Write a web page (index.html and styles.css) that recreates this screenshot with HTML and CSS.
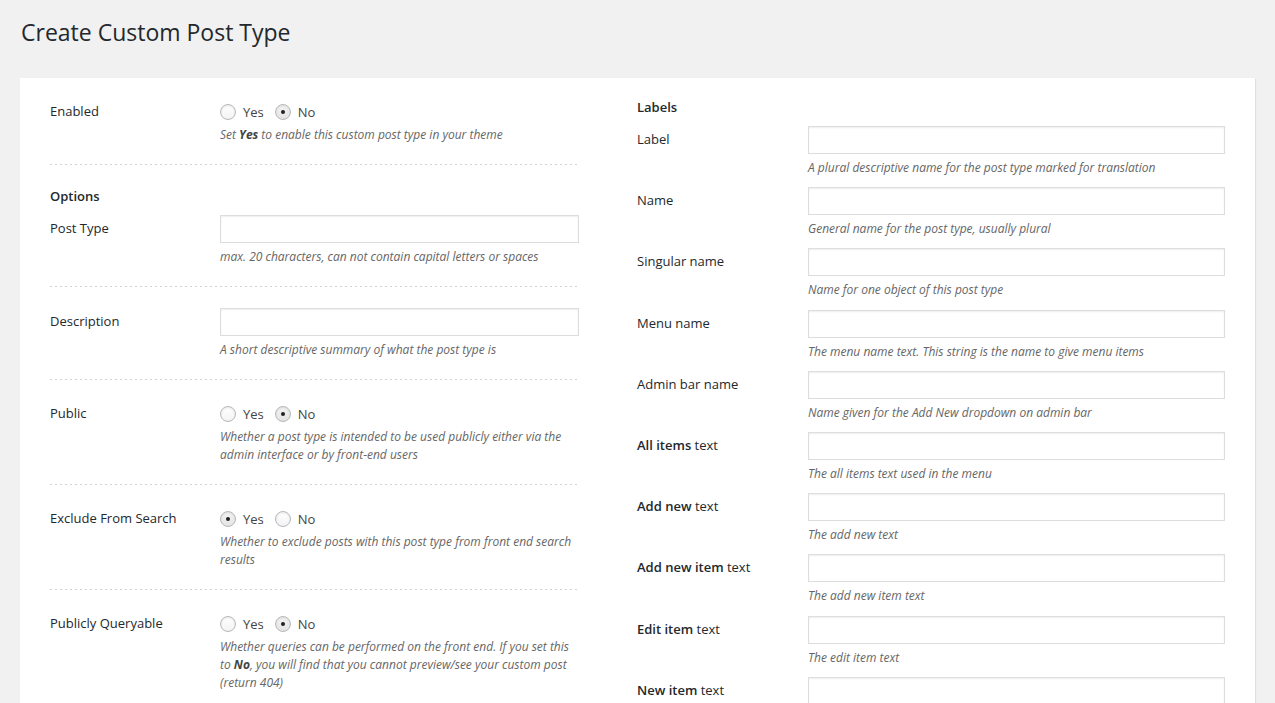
FILE: index.html
```html
<!DOCTYPE html>
<html lang="en">
<head>
<meta charset="utf-8">
<title>Create Custom Post Type</title>
<link rel="stylesheet" href="styles.css">
</head>
<body>
<div class="wrap">
  <h1 class="page-title">Create Custom Post Type</h1>
  <div class="panel">
    <div class="col col-left">
      <div class="section first">
        <div class="row">
          <div class="lbl lbl-radio">Enabled</div>
          <div class="field">
            <div class="radios">
              <span class="radio"></span><span class="rtext">Yes</span>
              <span class="radio checked"></span><span class="rtext">No</span>
            </div>
            <p class="desc">Set <b>Yes</b> to enable this custom post type in your theme</p>
          </div>
        </div>
      </div>
      <div class="section">
        <div class="heading">Options</div>
        <div class="row">
          <div class="lbl">Post Type</div>
          <div class="field">
            <input class="text" type="text">
            <p class="desc">max. 20 characters, can not contain capital letters or spaces</p>
          </div>
        </div>
      </div>
      <div class="section">
        <div class="row">
          <div class="lbl">Description</div>
          <div class="field">
            <input class="text" type="text">
            <p class="desc">A short descriptive summary of what the post type is</p>
          </div>
        </div>
      </div>
      <div class="section radio-sec">
        <div class="row">
          <div class="lbl lbl-radio">Public</div>
          <div class="field">
            <div class="radios">
              <span class="radio"></span><span class="rtext">Yes</span>
              <span class="radio checked"></span><span class="rtext">No</span>
            </div>
            <p class="desc">Whether a post type is intended to be used publicly either via the admin interface or by front-end users</p>
          </div>
        </div>
      </div>
      <div class="section radio-sec">
        <div class="row">
          <div class="lbl lbl-radio">Exclude From Search</div>
          <div class="field">
            <div class="radios">
              <span class="radio checked"></span><span class="rtext">Yes</span>
              <span class="radio"></span><span class="rtext">No</span>
            </div>
            <p class="desc">Whether to exclude posts with this post type from front end search results</p>
          </div>
        </div>
      </div>
      <div class="section radio-sec last">
        <div class="row">
          <div class="lbl lbl-radio">Publicly Queryable</div>
          <div class="field">
            <div class="radios">
              <span class="radio"></span><span class="rtext">Yes</span>
              <span class="radio checked"></span><span class="rtext">No</span>
            </div>
            <p class="desc">Whether queries can be performed on the front end. If you set this to <b>No</b>, you will find that you cannot preview/see your custom post (return 404)</p>
          </div>
        </div>
      </div>
    </div>

    <div class="col col-right">
      <div class="heading">Labels</div>
      <div class="rows">
        <div class="row">
          <div class="lbl">Label</div>
          <div class="field"><input class="text" type="text"><p class="desc">A plural descriptive name for the post type marked for translation</p></div>
        </div>
        <div class="row">
          <div class="lbl">Name</div>
          <div class="field"><input class="text" type="text"><p class="desc">General name for the post type, usually plural</p></div>
        </div>
        <div class="row">
          <div class="lbl">Singular name</div>
          <div class="field"><input class="text" type="text"><p class="desc">Name for one object of this post type</p></div>
        </div>
        <div class="row">
          <div class="lbl">Menu name</div>
          <div class="field"><input class="text" type="text"><p class="desc">The menu name text. This string is the name to give menu items</p></div>
        </div>
        <div class="row">
          <div class="lbl">Admin bar name</div>
          <div class="field"><input class="text" type="text"><p class="desc">Name given for the Add New dropdown on admin bar</p></div>
        </div>
        <div class="row">
          <div class="lbl"><b>All items</b> text</div>
          <div class="field"><input class="text" type="text"><p class="desc">The all items text used in the menu</p></div>
        </div>
        <div class="row">
          <div class="lbl"><b>Add new</b> text</div>
          <div class="field"><input class="text" type="text"><p class="desc">The add new text</p></div>
        </div>
        <div class="row">
          <div class="lbl"><b>Add new item</b> text</div>
          <div class="field"><input class="text" type="text"><p class="desc">The add new item text</p></div>
        </div>
        <div class="row">
          <div class="lbl"><b>Edit item</b> text</div>
          <div class="field"><input class="text" type="text"><p class="desc">The edit item text</p></div>
        </div>
        <div class="row">
          <div class="lbl"><b>New item</b> text</div>
          <div class="field"><input class="text" type="text"><p class="desc">The new item text</p></div>
        </div>
      </div>
    </div>
  </div>
</div>
</body>
</html>
```

FILE: styles.css
```css
html, body {
  margin: 0;
  padding: 0;
  background: #f1f1f1;
  height: 100%;
  overflow: hidden;
}

body {
  font-family: "Open Sans", "Liberation Sans", sans-serif;
  font-size: 13px;
  color: #444;
}

.wrap {
  padding: 0 20px;
}

.page-title {
  margin: 0;
  padding: 18px 0 0 1px;
  height: 78px;
  box-sizing: border-box;
  font-size: 23px;
  font-weight: 400;
  line-height: 29px;
  color: #23282d;
}

.panel {
  background: #fff;
  box-shadow: 1px 1px 1px rgba(0, 0, 0, 0.08);
  display: grid;
  grid-template-columns: 529px 588px;
  column-gap: 58px;
  padding: 0 30px;
  min-height: 700px;
}

.col-left {
  padding-top: 2px;
}

.section {
  padding: 21px 0;
  background-image: linear-gradient(to right, #d2d2d2 0, #d2d2d2 2px, transparent 2px);
  background-size: 5px 1px;
  background-repeat: repeat-x;
  background-position: left bottom;
}

.section.radio-sec {
  padding: 23px 0 21px;
}

.section.last {
  background-image: none;
}

.heading {
  font-weight: 600;
  line-height: 20px;
  color: #23282d;
  margin-bottom: 9px;
}

.col-right {
  padding-top: 19px;
}

.rows {
  display: flex;
  flex-direction: column;
  gap: 10.2px;
}

.row {
  display: grid;
  grid-template-columns: 170px 1fr;
}

.col-right .row {
  grid-template-columns: 171px 1fr;
}

.lbl {
  line-height: 26px;
  color: #23282d;
}

.lbl b {
  font-weight: 600;
}

.lbl-radio {
  line-height: 21px;
}

.field {
  min-width: 0;
}

.text {
  display: block;
  width: 100%;
  height: 28px;
  box-sizing: border-box;
  margin: 0;
  border: 1px solid #ddd;
  box-shadow: inset 0 1px 2px rgba(0, 0, 0, 0.07);
  background: #fff;
  font: inherit;
  border-radius: 0;
  padding: 3px 5px;
}

.desc {
  margin: 5px 0 0 0;
  font-style: italic;
  font-size: 12px;
  line-height: 18px;
  color: #666;
}

.radios + .desc {
  margin-top: 4px;
}

.desc b {
  font-weight: 700;
  color: #444;
}

.radios {
  display: flex;
  align-items: center;
  height: 21px;
  color: #444;
}

.radio {
  width: 16px;
  height: 16px;
  box-sizing: border-box;
  border: 1px solid #b4b9be;
  border-radius: 50%;
  background: linear-gradient(#fff, #f3f3f3);
  box-shadow: inset 0 1px 2px rgba(0, 0, 0, 0.1);
  display: flex;
  align-items: center;
  justify-content: center;
  margin-right: 7px;
}

.radio.checked {
  background: linear-gradient(#f4f4f4, #e4e4e4);
}

.radio.checked::before {
  content: "";
  width: 4px;
  height: 4px;
  border-radius: 50%;
  background: #222;
}

.rtext {
  margin-right: 11px;
}
```
